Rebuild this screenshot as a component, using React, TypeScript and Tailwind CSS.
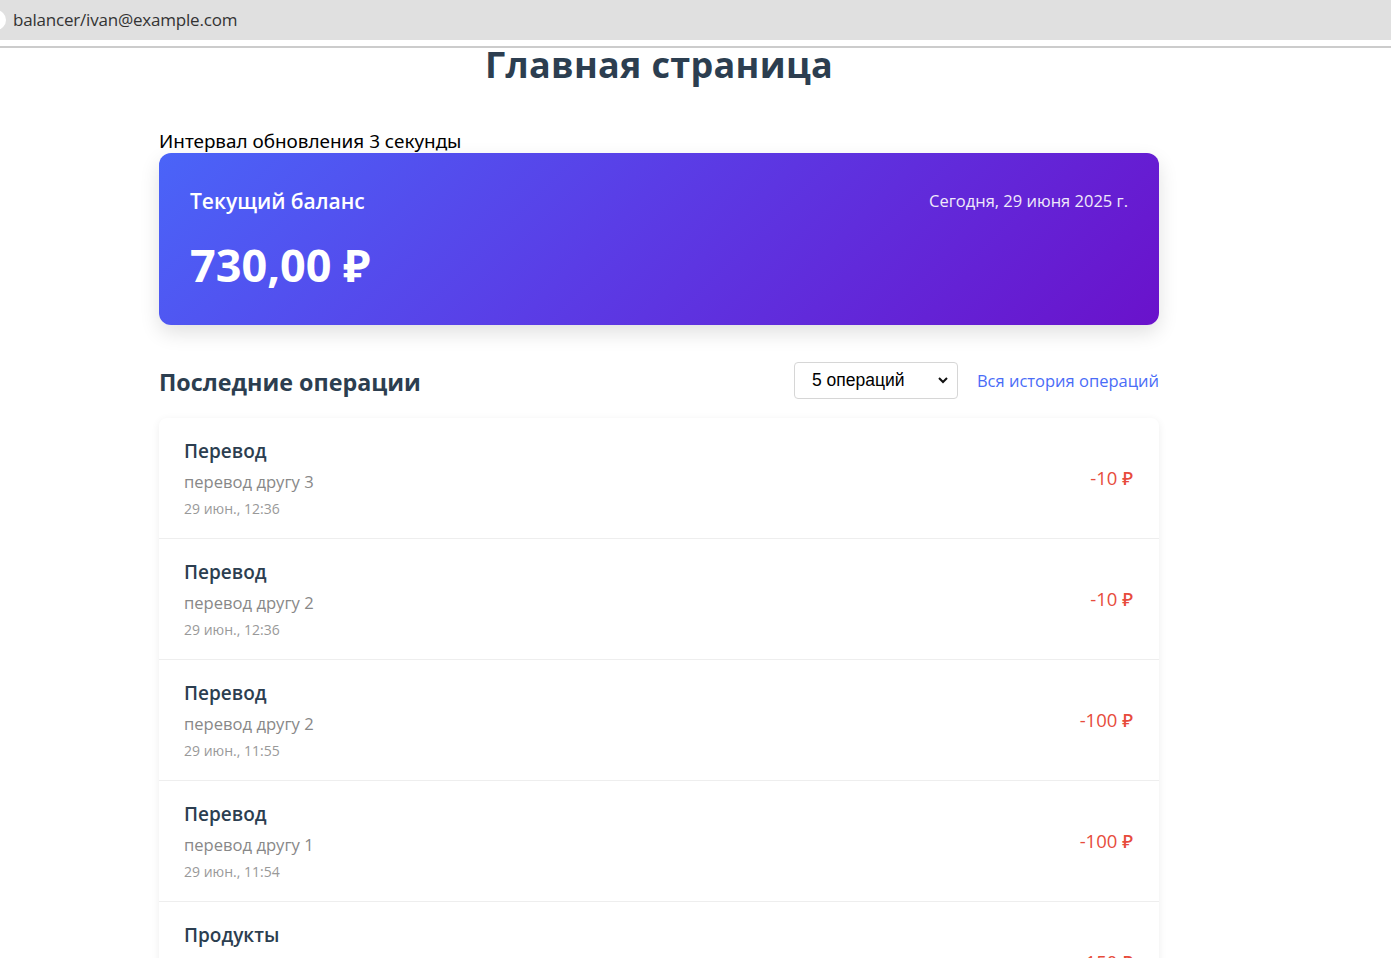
import React from "react";

const ops = [
  { t: "Перевод", d: "перевод другу 3", date: "29 июн., 12:36", a: "-10 ₽" },
  { t: "Перевод", d: "перевод другу 2", date: "29 июн., 12:36", a: "-10 ₽" },
  { t: "Перевод", d: "перевод другу 2", date: "29 июн., 11:55", a: "-100 ₽" },
  { t: "Перевод", d: "перевод другу 1", date: "29 июн., 11:54", a: "-100 ₽" },
  { t: "Продукты", d: "продукты", date: "29 июн., 11:50", a: "-150 ₽" },
];

export default function App() {
  return (
    <div className="h-[958px] overflow-hidden bg-white" style={{ fontFamily: '"Open Sans", "Noto Sans", sans-serif' }}>
      <div className="h-[40px] bg-[#e0e0e0] flex items-center relative">
        <div className="absolute left-[-14px] top-[10px] w-[20px] h-[20px] rounded-full bg-white"></div>
        <span className="ml-[13px] text-[17px] text-[#333] tracking-[-0.2px]">balancer/ivan@example.com</span>
      </div>
      <div className="h-[6px]"></div>
      <div className="h-[2px] bg-[#cccccc]"></div>
      <div className="ml-[159px] w-[1000px]">
        <h1 className="text-center text-[36px] font-bold text-[#2c3e50] leading-[38px] mt-[-2px] tracking-[0.3px]">Главная страница</h1>
        <div className="mt-[45px] text-[18.9px] text-black leading-[24px]" style={{ fontFamily: '"Noto Sans", sans-serif' }}>Интервал обновления 3 секунды</div>
        <div className="h-[172px] rounded-[12px] bg-[linear-gradient(135deg,#4a64f8_0%,#5a3de6_45%,#6a12cb_100%)] shadow-[0_8px_20px_rgba(0,0,0,0.12)] px-[31px] pt-[34px] text-white">
          <div className="flex justify-between items-start">
            <div className="text-[21px] font-semibold leading-[28px]">Текущий баланс</div>
            <div className="text-[16.5px] leading-[28px] opacity-90">Сегодня, 29 июня 2025 г.</div>
          </div>
          <div className="mt-[22px] text-[45px] font-bold leading-[56px]">730,00 ₽</div>
        </div>
        <div className="mt-[37px] flex items-center justify-between h-[36px]">
          <h2 className="text-[23.3px] font-bold text-[#2c3e50] mt-[4px]">Последние операции</h2>
          <div className="flex items-center gap-[19px]">
            <div className="w-[164px] h-[37px] border border-[#d6d6d6] rounded-[4px] flex items-center justify-between pl-[17px] pr-[8px] bg-white" style={{ fontFamily: '"Liberation Sans", Arial, sans-serif' }}>
              <span className="text-[17.5px] text-black">5 операций</span>
              <svg width="12" height="12" viewBox="0 0 12 12"><path d="M2 4 L6 8 L10 4" fill="none" stroke="#111" strokeWidth="2" /></svg>
            </div>
            <a className="text-[16.5px] text-[#4a6cf7] mt-[3px]">Вся история операций</a>
          </div>
        </div>
        <div className="mt-[20px] bg-white rounded-[8px] shadow-[0_2px_8px_rgba(0,0,0,0.07)]">
          {ops.map((o, i) => (
            <div key={i} className="h-[121px] border-b border-[#eeeeee] flex items-center justify-between pl-[25px] pr-[26px]">
              <div className="flex flex-col">
                <div className="text-[19px] font-semibold text-[#2c3e50] leading-[26px]">{o.t}</div>
                <div className="text-[16.6px] text-[#888] leading-[24px] mt-[6px]">{o.d}</div>
                <div className="text-[14px] text-[#999] leading-[20px] mt-[5px]">{o.date}</div>
              </div>
              <div className="text-[18.5px] text-[#e74c3c] font-medium">{o.a}</div>
            </div>
          ))}
        </div>
      </div>
    </div>
  );
}
